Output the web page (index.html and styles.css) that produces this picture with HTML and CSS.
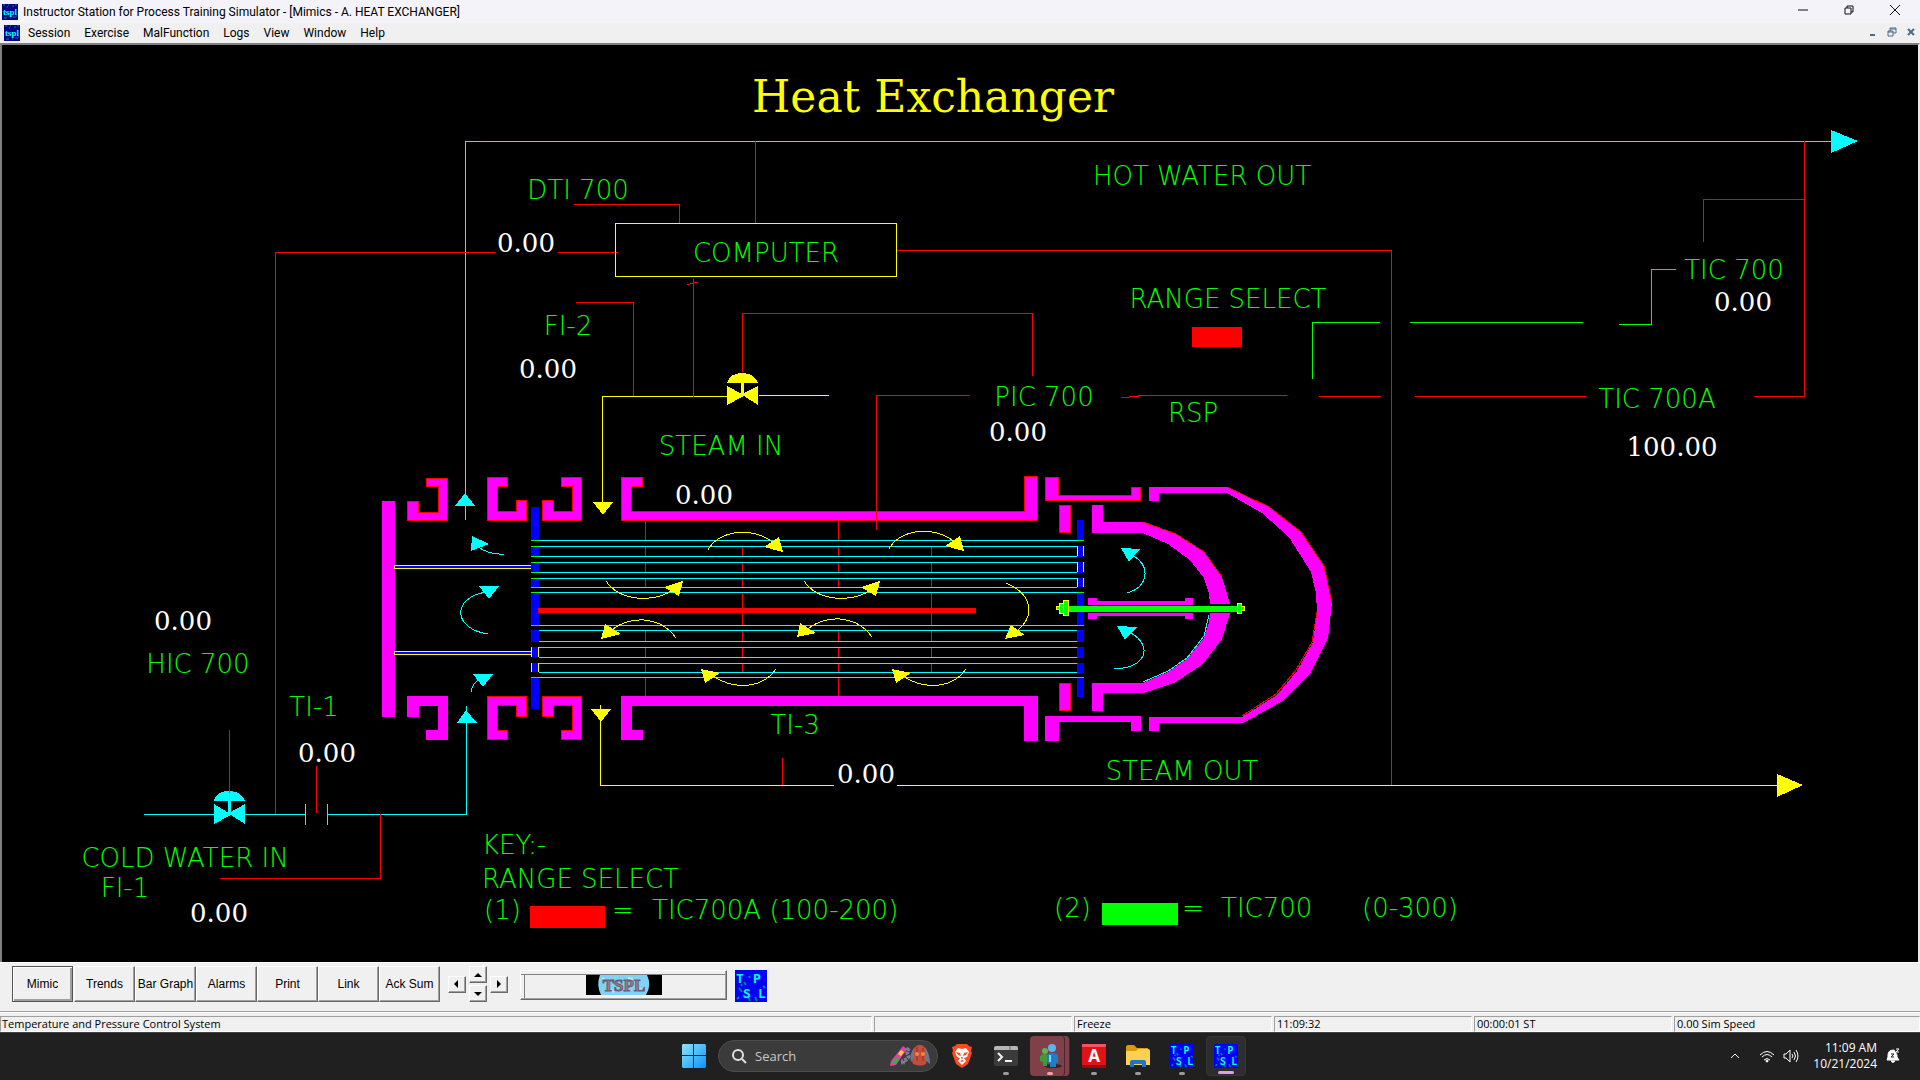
FILE: index.html
```html
<!DOCTYPE html>
<html lang="en">
<head>
<meta charset="utf-8">
<title>Instructor Station for Process Training Simulator</title>
<meta name="viewport" content="width=device-width, initial-scale=1">
<link rel="stylesheet" href="styles.css">
</head>
<body>
<svg class="defs" aria-hidden="true">
  <symbol id="app" viewBox="0 0 16 16">
    <rect width="16" height="16" fill="#000086"/>
    <path d="M1 1h2M6 1h1M10 2h2M13 1h2M2 14h3M8 14h1M11 13h3M5 3h1M14 12h1" stroke="#008a8a"/>
    <text x="8" y="11" class="app-text">tspl</text>
  </symbol>
  <symbol id="tpsl" viewBox="0 0 32 32">
    <rect width="32" height="32" fill="#0000fa"/>
    <path d="M4 18l3 4M8 25l3 3M2 29l2-2M14 6l1 2M28 16l2 2M9 12l2 3M20 27l2 4M13 27l2 4M6 14l1 2" stroke="#008080" stroke-width="2"/>
    <text class="tpsl-text" x="5" y="13">T</text>
    <text class="tpsl-text" x="22" y="13">P</text>
    <text class="tpsl-text" x="12" y="28">S</text>
    <text class="tpsl-text" x="27" y="28">L</text>
  </symbol>
</svg>

<header class="titlebar">
  <svg class="app-icon"><use href="#app"/></svg>
  <h1 class="caption">Instructor Station for Process Training Simulator - [Mimics - A. HEAT EXCHANGER]</h1>
  <div class="window-buttons">
    <button aria-label="Minimize"><svg viewBox="0 0 12 12"><path d="M1 6h10"/></svg></button>
    <button aria-label="Restore"><svg viewBox="0 0 12 12"><path d="M2 4h6v6H2zM4 4V2h6v6H8"/></svg></button>
    <button aria-label="Close"><svg viewBox="0 0 12 12"><path d="M1 1l10 10M11 1L1 11"/></svg></button>
  </div>
</header>

<nav class="menubar">
  <svg class="app-icon"><use href="#app"/></svg>
  <button>Session</button>
  <button>Exercise</button>
  <button>MalFunction</button>
  <button>Logs</button>
  <button>View</button>
  <button>Window</button>
  <button>Help</button>
  <div class="child-buttons">
    <button aria-label="Minimize mimic"><svg viewBox="0 0 10 10"><path d="M2 8h5" stroke-width="2"/></svg></button>
    <button aria-label="Restore mimic"><svg viewBox="0 0 10 10"><path d="M1 4h5v5H1zM3 4V1h6v5H6M1 5h5M3 2h6"/></svg></button>
    <button aria-label="Close mimic"><svg viewBox="0 0 10 10"><path d="M2 2l6 6M8 2L2 8" stroke-width="2"/></svg></button>
  </div>
</nav>

<main class="mimic">
<svg class="diagram" viewBox="2 45 1916 917" role="img" aria-label="Heat exchanger mimic">
  <text class="heading" x="933" y="112">Heat Exchanger</text>

  <!-- shell, nozzles and heads -->
  <g class="metal">
    <path d="M382 501H395V717H382z"/>
    <path d="M407 696H448V740H426V730H438V706H419V717H407z"/>
    <path d="M621 696H1038V741H1024V706H632V730H643V740H621z"/>
    <path d="M1045 716H1141V731H1131V722H1059V741H1045z"/>
    <path d="M1149 487H1227L1269 507 1301 532 1324 566 1332 603 1328 638 1311 672 1281 702 1243 723H1159V731H1149V717H1242L1277 695 1297 671 1313 642 1317 612 1316 593 1311 572 1289 537 1262 513 1227 493H1159V501H1149z"/>
    <path d="M1092 505H1103V522H1143L1176 534 1204 552 1222 577 1230 604H1210L1209 593 1204 578 1190 560 1168 544 1143 533H1092z"/>
    <path d="M1210 613H1230L1222 639 1203 664 1176 682 1143 693H1103V711H1092V683H1143L1168 672 1187 659 1204 638 1209 623z"/>
    <path d="M1088 598H1097V601H1185V598H1193V605H1088z"/>
    <path d="M1088 613H1193V619H1185V616H1097V619H1088z"/>
  </g>
  <g class="metal edged">
    <path d="M426 478H447V520H407V501H418V512H438V486H426z"/>
    <path d="M487 477H507V486H497V511H516V500H526V520H487z"/>
    <path d="M561 477H581V520H542V500H553V511H572V486H561z"/>
    <path d="M621 477H642V486H631V511H1024V476H1037V520H621z"/>
    <path d="M487 696H526V716H516V705H497V730H507V739H487z"/>
    <path d="M542 696H581V739H561V730H572V705H553V716H542z"/>
    <path d="M1045 477H1058V495H1131V487H1140V500H1045z"/>
    <path d="M1059 505H1070V532H1059zM1059 683H1070V710H1059z"/>
  </g>
  <path class="red" d="M1227 487L1269 507 1301 532 1324 566 1332 603M1242 716L1276 694 1296 670 1312 642 1317 612M1143 522L1176 534 1204 552 1222 577"/>
  <path class="cyan" d="M1143 682L1168 671 1187 658 1204 636 1209 615"/>

  <!-- partition plates -->
  <path class="plate" d="M394 565H531V568H394zM394 651H531V654H394z"/>

  <!-- tube sheets -->
  <path fill="#00f" d="M531 507h8v34h-8zM531 547h8v9h-8zM531 563h8v9h-8zM531 579h8v8h-8zM531 593h8v32h-8zM531 630h8v12h-8zM531 647h8v10h-8zM531 663h8v9h-8zM531 678h8v31h-8z
    M1077 520h7v20h-7zM1077 546h7v11h-7zM1077 562h7v11h-7zM1077 578h7v9h-7zM1077 593h7v32h-7zM1077 630h7v12h-7zM1077 647h7v11h-7zM1077 663h7v10h-7zM1077 678h7v19h-7z"/>

  <!-- baffles -->
  <path class="red" d="M645 521V540M645 546V556M645 562V572M645 578V587M645 630V641M645 647V657M645 663V672M645 677V696
    M838 521V540M838 546V556M838 562V572M838 578V587M838 630V641M838 647V657M838 663V672M838 677V696
    M742 546V556M742 562V572M742 578V587M742 592V625M742 630V641M742 647V657M742 663V672
    M931 546V556M931 562V572M931 578V587M931 592V625M931 630V641M931 647V657M931 663V672"/>

  <!-- tubes -->
  <path class="cyan" d="M539 540H1077M539 546H1077M539 556H1077M539 562H1077M539 572H1077M539 578H1077M539 587H1077M539 592H1077M539 625H1077M539 630H1077M539 641H1077M539 647H1077M539 657H1077M539 663H1077M539 672H1077M539 677H1077"/>
  <path class="green" d="M531 540h8M531 546h8M531 556h8M531 562h8M531 572h8M531 578h8M531 587h8M531 592h8M531 625h8M531 677h8M1077 540h7M1077 592h7M1077 625h7M1077 677h7"/>
  <path class="yellow" d="M531 647v10M538 647v10M531 663v9M538 663v9M1077 546v10M1083 546v10M1077 562v10M1083 562v10M1077 578v9M1083 578v9"/>
  <path fill="#f00" d="M538 608H976V613H538z"/>

  <!-- tie rod -->
  <path fill="#0f0" d="M1069 606H1237V612H1069z"/>
  <path class="nut" d="M1063 600H1068V615H1063zM1059 603H1063V613H1059zM1056 606H1059V609H1056zM1237 603H1241V613H1237zM1241 606H1244V610H1241z"/>

  <!-- shell side flow -->
  <path class="yellow" d="M708 550C718 530 755 525 776 545M889 549C899 529 936 524 957 544M606 581C620 602 655 603 674 589M804 581C818 602 853 603 872 589M676 638C662 618 634 614 613 629M872 637C858 617 830 613 809 628M776 669C762 689 734 690 713 676M966 669C952 689 924 690 903 676M1006 583C1032 594 1036 615 1017 631"/>
  <path fill="#ff0" d="M764 547L779 537 783 552zM945 546L960 536 964 551zM664 587L683 581 679 596zM861 587L880 581 876 596zM605 624L621 634 601 639zM800 623L816 633 797 637zM701 669L720 673 705 683zM892 669L911 673 896 683zM1011 625L1025 635 1005 639z"/>

  <!-- tube side flow -->
  <path class="cyan" d="M504 554Q490 555 478 547M488 634C453 629 451 598 486 592M471 692Q472 683 480 679M1127 593C1148 587 1151 567 1134 556M1114 669C1147 668 1153 646 1131 633"/>
  <path fill="#0ff" d="M472 536L489 544 471 551zM479 586H499L489 599zM473 674H493L483 687zM1121 548L1140 549 1129 562zM1117 626L1137 627 1125 640z"/>

  <!-- hot water -->
  <path class="cyan" d="M465 520V141H1831"/>
  <path fill="#0ff" d="M465 493L475 506H455zM1831 130L1858 141 1831 153z"/>

  <!-- cold water -->
  <path class="cyan" d="M144 814H305M305 804V825M327 804V825M327 814H466V706"/>
  <path fill="#0ff" d="M466 710L477 723H457zM214 804L229 813 245 804V824L231 815 214 824zM228 800H231V814H228zM214 801Q216 791 229 791 241 791 245 801z"/>

  <!-- steam -->
  <path class="yellow" d="M602 503V396H727M759 395H829M600 705V785H834M897 785H1777"/>
  <path fill="#ff0" d="M593 502H613L603 515zM591 709H611L601 722zM1777 774L1803 785 1777 797zM727 386L742 394 758 386V405L744 396 727 405zM741 382H744V396H741zM727 383Q730 373 742 373 754 373 758 383z"/>

  <!-- signal lines -->
  <path class="red" d="M275 814V252H495M558 252H618M574 204H679V224M755 141V223M896 250H1391V785M576 302H633V396M693 279V397M687 285L697 282M742 372V313H1032V376M969 395H876V530M1121 397H1129L1131 396H1138V395H1287M1319 396H1381M1415 396H1586M1754 396H1804V141M1806 199H1703V242M229 730V793M316 766V813M380 814V878H220M782 758V785"/>
  <path class="green" d="M1312 379V322H1380M1410 322H1583M1619 324H1651V269H1676"/>
  <path class="yellow" d="M615 223H896V276H615z"/>

  <path fill="#f00" d="M1192 327h50v20h-50zM530 906h75v22h-75z"/>
  <path fill="#0f0" d="M1102 903h76v22h-76z"/>

  <g class="tag">
    <text x="578" y="199">DTI 700</text>
    <text x="1202" y="185">HOT WATER OUT</text>
    <text x="766" y="262">COMPUTER</text>
    <text x="568" y="335">FI-2</text>
    <text x="1044" y="406">PIC 700</text>
    <text x="721" y="455">STEAM IN</text>
    <text x="1228" y="308">RANGE SELECT</text>
    <text x="1734" y="279">TIC 700</text>
    <text x="1657" y="408">TIC 700A</text>
    <text x="1193" y="422">RSP</text>
    <text x="198" y="673">HIC 700</text>
    <text x="314" y="716">TI-1</text>
    <text x="185" y="867">COLD WATER IN</text>
    <text x="125" y="897">FI-1</text>
    <text x="795" y="734">TI-3</text>
    <text x="1182" y="780">STEAM OUT</text>
  </g>
  <g class="tag key">
    <text x="482" y="854">KEY:-</text>
    <text x="482" y="888">RANGE SELECT</text>
    <text x="484" y="919">(1)</text>
    <text x="612" y="919">=</text>
    <text x="652" y="919">TIC700A (100-200)</text>
    <text x="1054" y="917">(2)</text>
    <text x="1182" y="917">=</text>
    <text x="1221" y="917">TIC700</text>
    <text x="1362" y="917">(0-300)</text>
  </g>
  <g class="value">
    <text x="526" y="252">0.00</text>
    <text x="548" y="378">0.00</text>
    <text x="1018" y="441">0.00</text>
    <text x="1743" y="311">0.00</text>
    <text x="1672" y="456">100.00</text>
    <text x="704" y="504">0.00</text>
    <text x="183" y="630">0.00</text>
    <text x="327" y="762">0.00</text>
    <text x="219" y="922">0.00</text>
    <text x="866" y="783">0.00</text>
  </g>
</svg>
</main>

<div class="toolbar">
  <div class="views">
    <button class="active">Mimic</button>
    <button>Trends</button>
    <button>Bar Graph</button>
    <button>Alarms</button>
    <button>Print</button>
    <button>Link</button>
    <button>Ack Sum</button>
  </div>
  <div class="pan">
    <button class="left" aria-label="Pan left"><svg viewBox="0 0 8 8"><path d="M5 0v8L1 4z"/></svg></button>
    <button class="up" aria-label="Pan up"><svg viewBox="0 0 8 8"><path d="M0 6h8L4 2z"/></svg></button>
    <button class="down" aria-label="Pan down"><svg viewBox="0 0 8 8"><path d="M0 2h8L4 6z"/></svg></button>
    <button class="right" aria-label="Pan right"><svg viewBox="0 0 8 8"><path d="M2 0v8l4-4z"/></svg></button>
  </div>
  <div class="banner">
    <svg viewBox="0 0 76 20">
      <rect width="76" height="20" fill="#000"/>
      <path d="M14 0H61Q66 10 60 20H15Q10 10 14 0z" fill="#7fd4f5"/>
      <path d="M16 3l3 2M24 15l4 2M50 16l6-2M42 3l5 1M30 9l3 1" stroke="#b9ecff" stroke-width="2"/>
      <text x="38" y="16">TSPL</text>
    </svg>
  </div>
  <svg class="brand"><use href="#tpsl"/></svg>
</div>

<footer class="status">
  <span class="wide">Temperature and Pressure Control System</span>
  <span></span>
  <span>Freeze</span>
  <span>11:09:32</span>
  <span>00:00:01 ST</span>
  <span class="last">0.00 Sim Speed</span>
</footer>

<div class="taskbar">
  <div class="apps">
    <button aria-label="Start"><svg viewBox="0 0 24 24">
      <linearGradient id="win" x1="0" y1="0" x2="1" y2="1"><stop offset="0" stop-color="#8fe3ff"/><stop offset="1" stop-color="#0a93f5"/></linearGradient>
      <path fill="url(#win)" d="M1 0h10v11H0V1zM12 0h11l1 1v10H12zM0 12h11v12H1l-1-1zM12 12h12v11l-1 1H12z"/></svg></button>
    <label class="search">
      <svg class="lens" viewBox="0 0 16 16"><circle cx="7" cy="7" r="5"/><path d="M11 11l4 4"/></svg>
      <input type="text" placeholder="Search" aria-label="Search">
      <svg class="art" viewBox="0 0 42 24">
        <path d="M14 2l4 3L7 21l-6 1 1-5z" fill="#e83fa0"/><path d="M12 6l3 2-3 4-3-2z" fill="#ffd23c"/><path d="M7 13l3 2-3 5-4-1z" fill="#30b04c"/>
        <path d="M20 4q-3 4-1 7t-5 6v4" fill="none" stroke="#7d7d96" stroke-width="4" stroke-dasharray="3 1"/>
        <path d="M24 20Q20 9 26 3q6-5 10 1 3 7 1 16-5 3-13 0z" fill="#c34d3d"/><path d="M25 4q-5 6-3 14l3-5zM36 3q5 7 5 17l-5-4z" fill="#73758c"/>
        <path d="M28 3v14M34 4v13" stroke="#8a2f2d"/><circle cx="28" cy="10" r="2" fill="#ef8a36"/><circle cx="34" cy="10" r="2" fill="#ef8a36"/>
      </svg>
    </label>
    <button aria-label="Brave"><svg viewBox="0 0 24 24">
      <path fill="#fb4a1e" d="M7 0h10l2 2 3 1-1 4 1 2-4 11-6 4-6-4L2 9l1-2-1-4 3-1z"/>
      <path fill="#fff" d="M8 4l4 1 4-1 3 4-2 5-3 1 2 3-4 4-4-4 2-3-3-1-2-5z"/>
      <path fill="#fb4a1e" d="M6 8l4 1 1 3-3-1zM18 8l-4 1-1 3 3-1zM11 13h2l-1 3zM10 17l2-1 2 1-2 1z"/></svg></button>
    <button class="running" aria-label="Terminal"><svg viewBox="0 0 24 24">
      <rect y="2" width="24" height="20" rx="2" fill="#3b3b3b"/><path d="M0 6V4q0-2 2-2h20q2 0 2 2v2z" fill="#b5b5b5"/><path d="M16 2v4" stroke="#666"/>
      <path d="M4 9l4 4-4 4M11 17h7" fill="none" stroke="#f2f2f2" stroke-width="2"/></svg></button>
    <button class="running alert" aria-label="Instructor"><svg viewBox="0 0 24 24">
      <ellipse cx="15" cy="22" rx="9" ry="2" fill="#3c2026"/>
      <circle cx="7" cy="7" r="3" fill="#63b54b"/><path fill="#3f9a3a" d="M2 12q5-4 9 0v5l-2 1v4H5v-4l-3-1z"/>
      <circle cx="14" cy="4" r="4" fill="#5bb4ee"/><path fill="#1f7fc4" d="M9 11q5-4 11 0v7l-2 1v4h-6v-4l-3-1z"/><path fill="#8ad0f8" d="M11 11h2v7h-2z"/></svg></button>
    <button class="running" aria-label="Acrobat"><svg viewBox="0 0 24 24">
      <rect width="24" height="24" rx="1" fill="#e01217"/><path d="M0 0h24v3H0z" fill="#f4545a"/><path d="M0 21h24v3H0z" fill="#a30509"/>
      <text class="acro" x="12" y="18">A</text></svg></button>
    <button class="running" aria-label="File Explorer"><svg viewBox="0 0 24 24">
      <path fill="#d99a0b" d="M0 3q0-2 2-2h6l3 3h11v5H0z"/><path fill="#fdd04f" d="M0 7h10l2-2h10q2 0 2 2v14H0z"/>
      <path fill="#1976c8" d="M4 23v-5q0-2 2-2h12q2 0 2 2v5h-4v-3H8v3z"/></svg></button>
    <button class="running" aria-label="Simulator"><svg><use href="#tpsl"/></svg></button>
    <button class="running current" aria-label="Instructor Station"><svg><use href="#tpsl"/></svg></button>
  </div>
  <div class="tray">
    <button aria-label="Show hidden icons"><svg viewBox="0 0 16 16"><path d="M4 10l4-4 4 4"/></svg></button>
    <button class="network" aria-label="Network and sound">
      <svg viewBox="0 0 16 16"><path d="M1 7q7-7 14 0M3 9q5-5 10 0M5 12q3-3 6 0"/><circle cx="8" cy="13" r="1" fill="#fff"/></svg>
      <svg viewBox="0 0 16 16"><path d="M1 6h2l4-4v12l-4-4H1zM9 6q2 2 0 4M11 4q3 4 0 8M13 2q4 6 0 12"/></svg>
    </button>
    <time class="clock" datetime="2024-10-21T11:09">11:09 AM<br>10/21/2024</time>
    <button aria-label="Notifications"><svg viewBox="0 0 16 16"><path class="bell" d="M2 12h12l-2-3V7L9 2Q3 2 3 7v2zM6 13h4q-2 3-4 0z"/><path class="zed" d="M6 6h3l-3 3h3"/><path d="M11 1h3l-3 3h3"/></svg></button>
  </div>
</div>
</body>
</html>
```
FILE: styles.css
```css
* { box-sizing: border-box; }

body {
  margin: 0;
  min-height: 100vh;
  display: flex;
  flex-direction: column;
  background: #202020;
  color: #000;
  font: 12px/16px "Open Sans", "Noto Sans", sans-serif;
}

button {
  margin: 0;
  padding: 0;
  border: 0;
  background: none;
  color: inherit;
  font: inherit;
}

.defs { position: absolute; width: 0; height: 0; }
.app-text { font: bold 9px "Liberation Serif", serif; fill: #0ff; text-anchor: middle; }
.tpsl-text { font: bold 13px "DejaVu Sans Mono", monospace; fill: #0ff; text-anchor: middle; }
.app-icon { width: 16px; height: 16px; flex: none; }

/* window chrome */
.titlebar, .menubar { font-family: Roboto, "Open Sans", sans-serif; }
.titlebar {
  display: flex;
  align-items: center;
  height: 23px;
  padding-left: 2px;
  background: #f3f3f9;
}
.caption { margin: 0 0 0 5px; font-size: 12px; font-weight: 400; }
.window-buttons { display: flex; margin-left: auto; padding-right: 2px; }
.window-buttons button { width: 46px; height: 22px; }
.window-buttons svg { width: 12px; height: 12px; fill: none; stroke: #111; }

.menubar {
  display: flex;
  align-items: center;
  gap: 14px;
  height: 20px;
  padding-left: 4px;
  background: #f0f0f0;
}
.menubar .app-icon { margin-right: -6px; }
.child-buttons { display: flex; margin-left: auto; }
.child-buttons button { width: 19px; height: 18px; }
.child-buttons svg { width: 10px; height: 10px; fill: none; stroke: #4c6a8c; }

/* process mimic */
.mimic {
  flex: 1;
  background: #000;
  border-style: solid;
  border-width: 2px 2px 0;
  border-color: #808080 #e8e8e8 #808080 #808080;
}
.diagram { display: block; width: 100%; height: auto; shape-rendering: crispEdges; }
.diagram path { stroke-width: 1; }
.red, .cyan, .green, .yellow { fill: none; }
.red { stroke: #f00; }
.cyan { stroke: #0ff; }
.green { stroke: #0f0; }
.yellow { stroke: #ff0; }
.metal { fill: #f0f; }
.edged { stroke: #f00; }
.plate { fill: #00f; stroke: #ff0; }
.nut { fill: #0f0; stroke: #ff0; }
.heading { font: 44px "DejaVu Serif", serif; fill: #ff0; text-anchor: middle; }
.tag { font: 200 26px "DejaVu Sans", sans-serif; fill: #0f0; text-anchor: middle; }
.key { text-anchor: start; }
.value { font: 26px "DejaVu Serif", serif; fill: #fff; text-anchor: middle; }

/* toolbar */
.toolbar {
  display: flex;
  align-items: flex-start;
  height: 50px;
  padding: 3px 12px 0;
  background: #f0f0f0;
  border-top: 1px solid #fff;
  border-bottom: 1px solid #a0a0a0;
  font: 12px/16px "Liberation Sans", sans-serif;
}
.views { display: flex; }
.views button, .pan button {
  background: #f0f0f0;
  border: 1px solid;
  border-color: #fff #696969 #696969 #fff;
  box-shadow: inset -1px -1px #a0a0a0;
}
.views button { width: 61px; height: 36px; white-space: nowrap; }
.views .active { margin-right: 1px; border-color: #555; box-shadow: inset 1px 1px #fff, inset -2px -2px #a0a0a0; }
.pan {
  display: grid;
  grid-template-columns: repeat(3, 18px);
  grid-template-rows: 17px 17px;
  gap: 2px 3px;
  margin-left: 8px;
}
.pan button { height: 17px; line-height: 8px; }
.pan svg { width: 8px; height: 8px; }
.pan .left, .pan .right { grid-row: 1 / 3; align-self: center; }
.pan .left { grid-column: 1; }
.pan .up { grid-column: 2; grid-row: 1; }
.pan .down { grid-column: 2; grid-row: 2; }
.pan .right { grid-column: 3; }
.banner {
  display: flex;
  justify-content: center;
  width: 207px;
  height: 30px;
  margin: 4px 8px 0 12px;
  padding: 2px;
  border: 1px solid;
  border-color: #fff #696969 #696969 #fff;
  box-shadow: inset -1px -1px #a0a0a0, inset 0 3px #f0f0f0, inset 0 4px #808080, inset 3px 0 #f0f0f0, inset 4px 0 #808080;
}
.banner svg { width: 76px; height: 20px; margin-top: 2px; }
.banner text { font: bold 17px "Liberation Serif", serif; fill: #a3808e; stroke: #6e5a70; text-anchor: middle; }
.brand { width: 32px; height: 32px; margin-top: 4px; }

.status {
  display: flex;
  gap: 2px;
  height: 20px;
  padding-top: 3px;
  background: #f0f0f0;
  border-top: 1px solid #fff;
  font-size: 11px;
}
.status span {
  flex: none;
  width: 198px;
  height: 16px;
  padding-left: 2px;
  border: 1px solid;
  border-color: #a0a0a0 #fff #fff #a0a0a0;
  line-height: 14px;
  white-space: nowrap;
}
.status .wide { flex: 1; padding-left: 1px; }
.status .last { width: 246px; }

/* taskbar */
.taskbar {
  display: grid;
  grid-template-columns: 1fr auto 1fr;
  align-items: center;
  height: 48px;
  background: #202020;
  box-shadow: inset 0 1px #444;
  color: #fff;
}
.apps { grid-column: 2; display: flex; align-items: center; gap: 4px; }
.apps button {
  position: relative;
  width: 40px;
  height: 40px;
  display: flex;
  align-items: center;
  justify-content: center;
  border-radius: 4px;
}
.apps button svg { width: 24px; height: 24px; }
.running::after {
  content: "";
  position: absolute;
  bottom: 1px;
  left: 17px;
  width: 6px;
  height: 3px;
  border-radius: 2px;
  background: #9a9a9a;
}
.apps .alert { background: #80404a; border-right: 1px solid #4a262c; box-shadow: inset -4px 0 #80404a, inset -5px 0 #4a262c; }
.alert::after { background: #ff99a4; }
.apps .current { background: #2d2d2d; border: 1px solid #363636; }
.current::after { left: 11px; width: 16px; background: #d9a2e0; }
.acro { font: bold 17px "Open Sans", sans-serif; fill: #fff; text-anchor: middle; }
.search {
  display: flex;
  align-items: center;
  gap: 8px;
  width: 220px;
  height: 32px;
  padding: 0 6px 0 12px;
  border: 1px solid #4c4c4c;
  border-radius: 16px;
  background: #3b3b3b;
}
.lens { width: 16px; height: 16px; flex: none; fill: none; stroke: #e0e0e0; stroke-width: 2; }
.search input {
  flex: 1;
  min-width: 0;
  padding: 0;
  border: 0;
  background: none;
  color: #fff;
  font: 13px/18px "Open Sans", sans-serif;
}
.search input::placeholder { color: #c8c8c8; opacity: 1; }
.art { width: 42px; height: 24px; flex: none; }

.tray { justify-self: end; display: flex; align-items: center; padding-right: 19px; }
.tray svg { width: 16px; height: 16px; fill: none; stroke: #fff; display: block; }
.network { display: flex; gap: 8px; margin: 0 14px 0 16px; }
.clock { margin-right: 8px; min-width: 64px; text-align: right; }
.tray .bell { fill: #fff; }
.tray .zed { stroke: #202020; }
```
